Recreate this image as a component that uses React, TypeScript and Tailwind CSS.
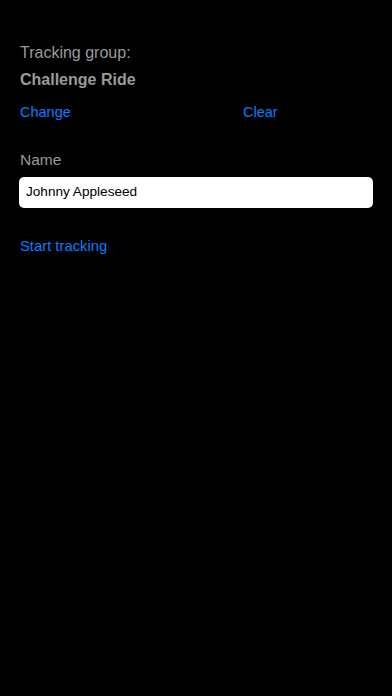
export default function App() {
  return (
    <div className="min-h-[696px] w-full bg-black px-5 pt-[42px] font-['Liberation_Sans',sans-serif]">
      <div className="text-[16px] leading-[22px] text-[#9a9a9a]">Tracking group:</div>
      <div className="mt-[5px] text-[16px] font-bold leading-[22px] text-[#9a9a9a]">Challenge Ride</div>
      <div className="mt-[11px] flex text-[14.5px] leading-[20px] text-[#0a7cff]">
        <button className="w-[223px] text-left">Change</button>
        <button className="text-left">Clear</button>
      </div>
      <div className="mt-[27px] text-[15.5px] leading-[22px] text-[#9a9a9a]">Name</div>
      <div className="mt-[6px] mr-[-1px] ml-[-1px] flex h-[31px] items-center rounded-[5px] bg-white px-[7px] text-[13.6px] text-black">
        Johnny Appleseed
      </div>
      <div className="mt-[28px] text-[14.8px] leading-[20px] text-[#0a7cff]">Start tracking</div>
    </div>
  );
}
